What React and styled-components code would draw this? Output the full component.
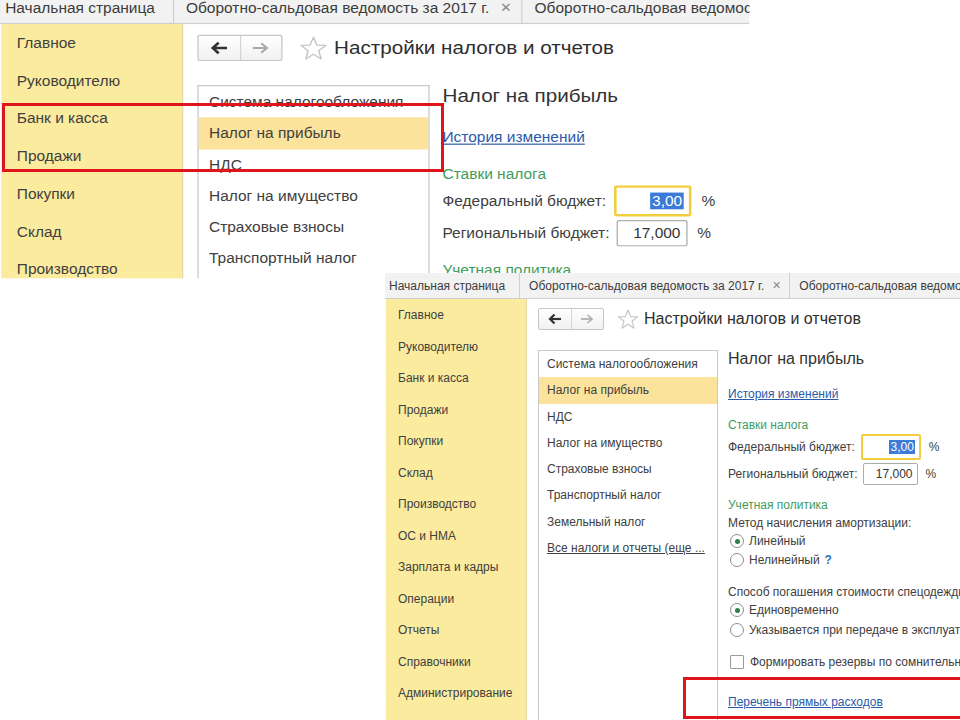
import React from "react";
import styled, { createGlobalStyle } from "styled-components";

const GlobalStyle = createGlobalStyle`
  html, body { margin: 0; padding: 0; background: #fff; }
  body { font-family: "Liberation Sans", Arial, sans-serif; }
`;

const Canvas = styled.div`
  position: relative;
  width: 960px;
  height: 720px;
  overflow: hidden;
  background: #fff;
`;

// each screenshot is a window placed on the slide
const Window = styled.div`
  position: absolute;
  left: ${(p) => p.$x}px;
  top: ${(p) => p.$y}px;
  width: ${(p) => p.$w}px;
  height: ${(p) => p.$h}px;
  transform: scale(${(p) => p.$sx}, ${(p) => p.$sy});
  transform-origin: 0 0;
  overflow: hidden;
  background: #fff;
  display: flex;
  flex-direction: column;
  font-size: 12px;
  color: #404040;
  z-index: ${(p) => p.$z};
`;

const TabBar = styled.div`
  display: flex;
  flex: none;
  height: 26px;
  background: #f2f2f2;
  border-bottom: 1px solid #cfcfcf;
  box-sizing: border-box;
`;

const Tab = styled.div`
  display: flex;
  align-items: center;
  gap: 8px;
  padding: ${(p) => (p.$first ? "0 14px 0 4px" : "0 8px 0 9px")};
  border-right: 1px solid #d0d0d0;
  white-space: nowrap;
  color: #3c3c3c;
`;

const Close = styled.span`
  color: #8a8a8a;
  font-size: 11px;
`;

const Body = styled.div`
  display: flex;
  flex: 1;
  min-height: 0;
`;

const Sidebar = styled.div`
  flex: none;
  width: 140px;
  margin-left: 1px;
  padding-top: 1px;
  background: #fbeb9e;
  border-right: 1px solid #e2d9a6;
`;

const SideItem = styled.div`
  height: 31.5px;
  line-height: 31.5px;
  padding-left: 12px;
  white-space: nowrap;
  color: #404040;
`;

const Main = styled.div`
  flex: 1;
  display: flex;
  flex-direction: column;
  padding: 9px 0 0 11px;
  min-width: 0;
`;

const Header = styled.div`
  display: flex;
  align-items: center;
  height: 22px;
  flex: none;
`;

const NavBox = styled.div`
  display: flex;
  width: 66px;
  height: 22px;
  box-sizing: border-box;
  border: 1px solid #c6c6c6;
  border-radius: 2px;
  background: linear-gradient(#ffffff, #f1f1f1);
`;

const NavButton = styled.div`
  flex: 1;
  display: flex;
  align-items: center;
  justify-content: center;
  border-left: ${(p) => (p.$divided ? "1px solid #d4d4d4" : "none")};
`;

const StarWrap = styled.div`
  display: flex;
  margin-left: 13px;
`;

const Title = styled.div`
  margin-left: 5px;
  font-size: 16px;
  color: #2e2e2e;
  white-space: nowrap;
`;

const Content = styled.div`
  display: flex;
  flex: 1;
  gap: 10px;
  margin-top: 20px;
  min-height: 0;
`;

const ListBox = styled.div`
  flex: none;
  width: 180px;
  box-sizing: border-box;
  border: 1px solid #c9c9c9;
  border-bottom: none;
`;

const ListItem = styled.div`
  height: 26.3px;
  line-height: 26.3px;
  padding-left: 8px;
  white-space: nowrap;
  overflow: hidden;
  background: ${(p) => (p.$active ? "#fce39b" : "transparent")};
  text-decoration: ${(p) => (p.$link ? "underline" : "none")};
  color: #404040;
`;

const Panel = styled.div`
  display: flex;
  flex-direction: column;
  white-space: nowrap;
`;

const PanelTitle = styled.div`
  flex: none;
  height: 18px;
  line-height: 18px;
  font-size: 16px;
  color: #333;
`;

const Line = styled.div`
  flex: none;
  display: flex;
  align-items: center;
  gap: ${(p) => p.$gap || 0}px;
  height: ${(p) => p.$h || 18}px;
  margin-top: ${(p) => p.$mt || 0}px;
`;

const Link = styled.span`
  color: #2a5aa8;
  text-decoration: underline;
`;

const Section = styled.span`
  color: #3f9c60;
`;

const Field = styled.div`
  box-sizing: border-box;
  width: ${(p) => p.$w}px;
  height: ${(p) => p.$h}px;
  margin-left: ${(p) => p.$ml}px;
  padding-right: 4px;
  display: flex;
  align-items: center;
  justify-content: flex-end;
  border: ${(p) => (p.$focus ? "2px solid #f2cd3c" : "1px solid #adadad")};
  border-radius: 2px;
  background: #fff;
  color: #333;
`;

const Selected = styled.span`
  background: #3b7ad6;
  color: #fff;
  padding: 0 1px;
`;

const Percent = styled.span`
  margin-left: 8px;
`;

const Radio = styled.span`
  position: relative;
  flex: none;
  width: 12px;
  height: 12px;
  margin-left: 2px;
  border: 1px solid #8e8e8e;
  border-radius: 50%;
  background: #fff;
  &::after {
    content: "";
    display: ${(p) => (p.$on ? "block" : "none")};
    position: absolute;
    left: 3.5px;
    top: 3.5px;
    width: 5px;
    height: 5px;
    border-radius: 50%;
    background: #2f7d4a;
  }
`;

const Checkbox = styled.span`
  flex: none;
  width: 12px;
  height: 12px;
  margin-left: 2px;
  border: 1px solid #9a9a9a;
  border-radius: 1px;
  background: #fff;
`;

const Help = styled.span`
  color: #2c6fc0;
  font-weight: bold;
`;

const Mark = styled.div`
  position: absolute;
  left: ${(p) => p.$x}px;
  top: ${(p) => p.$y}px;
  width: ${(p) => p.$w}px;
  height: ${(p) => p.$h}px;
  box-sizing: border-box;
  border: 3px solid #e0141b;
  z-index: 5;
  pointer-events: none;
`;

const ArrowLeft = () => (
  <svg width="14" height="12" viewBox="0 0 14 12">
    <path d="M2 6 H13" stroke="#333" strokeWidth="2.2" />
    <path d="M6.5 1.5 L2 6 L6.5 10.5" stroke="#333" strokeWidth="2.2" fill="none" />
  </svg>
);

const ArrowRight = () => (
  <svg width="14" height="12" viewBox="0 0 14 12">
    <path d="M1 6 H12" stroke="#a9a9a9" strokeWidth="1.6" />
    <path d="M7.5 2 L12 6 L7.5 10" stroke="#a9a9a9" strokeWidth="1.6" fill="none" />
  </svg>
);

const Star = () => (
  <svg width="22" height="21" viewBox="0 0 22 21">
    <polygon
      points="11,1 13.6,7.6 20.6,7.9 15.1,12.3 17,19.2 11,15.3 5,19.2 6.9,12.3 1.4,7.9 8.4,7.6"
      fill="none"
      stroke="#c4c4c4"
      strokeWidth="1.1"
      strokeLinejoin="round"
    />
  </svg>
);

const sections = [
  "Главное",
  "Руководителю",
  "Банк и касса",
  "Продажи",
  "Покупки",
  "Склад",
  "Производство",
  "ОС и НМА",
  "Зарплата и кадры",
  "Операции",
  "Отчеты",
  "Справочники",
  "Администрирование",
];

const taxes = [
  "Система налогообложения",
  "Налог на прибыль",
  "НДС",
  "Налог на имущество",
  "Страховые взносы",
  "Транспортный налог",
  "Земельный налог",
];

const Screen = (props) => (
  <Window {...props}>
    <TabBar>
      <Tab $first>Начальная страница</Tab>
      <Tab>
        Оборотно-сальдовая ведомость за 2017 г. <Close>✕</Close>
      </Tab>
      <Tab>Оборотно-сальдовая ведомость за 2017 г.</Tab>
    </TabBar>
    <Body>
      <Sidebar>
        {sections.map((s) => (
          <SideItem key={s}>{s}</SideItem>
        ))}
      </Sidebar>
      <Main>
        <Header>
          <NavBox>
            <NavButton>
              <ArrowLeft />
            </NavButton>
            <NavButton $divided>
              <ArrowRight />
            </NavButton>
          </NavBox>
          <StarWrap>
            <Star />
          </StarWrap>
          <Title>Настройки налогов и отчетов</Title>
        </Header>
        <Content>
          <ListBox>
            {taxes.map((t) => (
              <ListItem key={t} $active={t === "Налог на прибыль"}>
                {t}
              </ListItem>
            ))}
            <ListItem $link>Все налоги и отчеты (еще ...</ListItem>
          </ListBox>
          <Panel>
            <PanelTitle>Налог на прибыль</PanelTitle>
            <Line $mt={17}>
              <Link>История изменений</Link>
            </Line>
            <Line $mt={13}>
              <Section>Ставки налога</Section>
            </Line>
            <Line $h={26}>
              Федеральный бюджет:
              <Field $w={60} $h={26} $ml={6} $focus>
                <Selected>3,00</Selected>
              </Field>
              <Percent>%</Percent>
            </Line>
            <Line $h={22} $mt={3}>
              Региональный бюджет:
              <Field $w={55} $h={22} $ml={5}>
                17,000
              </Field>
              <Percent>%</Percent>
            </Line>
            <Line $mt={11}>
              <Section>Учетная политика</Section>
            </Line>
            <Line>Метод начисления амортизации:</Line>
            <Line $gap={5}>
              <Radio $on />
              Линейный
            </Line>
            <Line $gap={5} $mt={1}>
              <Radio />
              Нелинейный <Help>?</Help>
            </Line>
            <Line $mt={14}>Способ погашения стоимости спецодежды и спецоснастки:</Line>
            <Line $gap={5}>
              <Radio $on />
              Единовременно
            </Line>
            <Line $gap={5} $mt={2}>
              <Radio />
              Указывается при передаче в эксплуатацию
            </Line>
            <Line $gap={6} $mt={14}>
              <Checkbox />
              Формировать резервы по сомнительным долгам
            </Line>
            <Line $mt={22}>
              <Link>Перечень прямых расходов</Link>
            </Line>
          </Panel>
        </Content>
      </Main>
    </Body>
  </Window>
);

export default function App() {
  return (
    <Canvas>
      <GlobalStyle />
      <Screen $x={0} $y={-7} $w={581} $h={239} $sx={1.29} $sy={1.195} $z={1} />
      <Screen $x={385} $y={273} $w={580} $h={447} $sx={1} $sy={1} $z={2} />
      <Mark $x={2} $y={103} $w={442} $h={69} />
      <Mark $x={683} $y={677} $w={290} $h={42} />
    </Canvas>
  );
}
